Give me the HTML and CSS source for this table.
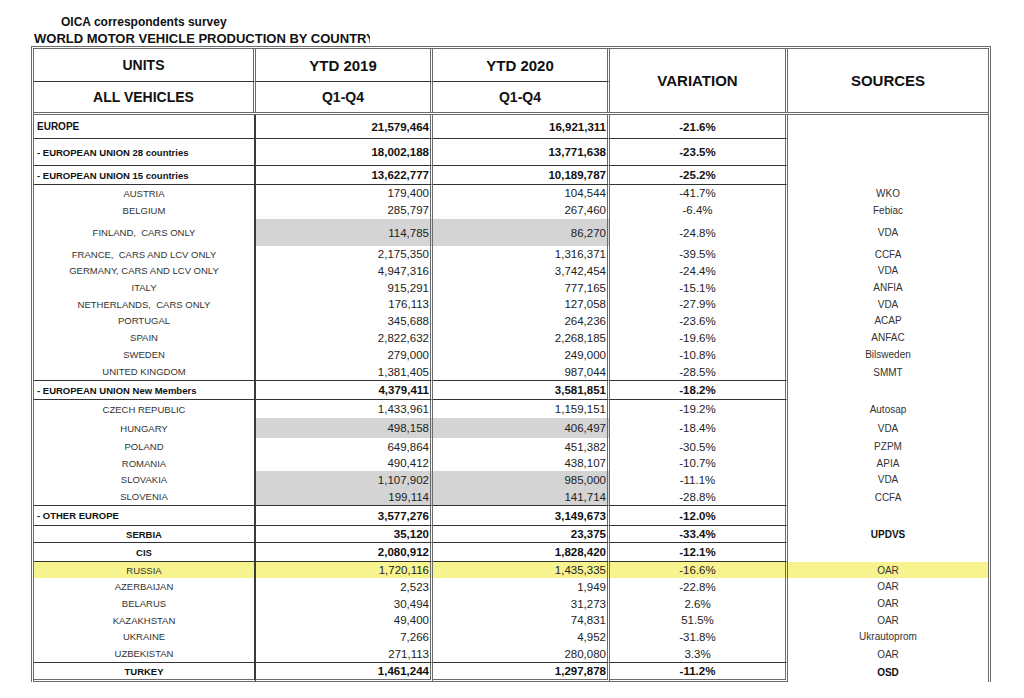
FILE: index.html
```html
<!DOCTYPE html>
<html lang="en">
<head>
<meta charset="utf-8">
<title>OICA correspondents survey</title>
<link rel="stylesheet" href="styles.css">
</head>
<body>
<div class="page">
  <div class="title">OICA correspondents survey</div>
  <div class="subtitle">WORLD MOTOR VEHICLE PRODUCTION BY COUNTRY</div>
  <div class="sheet">
    <div class="head">
      <div class="hc c1 r1 top small">UNITS</div>
      <div class="hc c2 r1 top">YTD 2019</div>
      <div class="hc c3 r1 top">YTD 2020</div>
      <div class="hc c4 span">VARIATION</div>
      <div class="hc c5 span">SOURCES</div>
      <div class="hc c1 r2 small">ALL VEHICLES</div>
      <div class="hc c2 r2 small">Q1-Q4</div>
      <div class="hc c3 r2 small">Q1-Q4</div>
    </div>

    <div class="row h24 ln grp"><div class="c1 left big">EUROPE</div><div class="c2">21,579,464</div><div class="c3">16,921,311</div><div class="c4">-21.6%</div><div class="c5"></div></div>
    <div class="row h27 ln grp"><div class="c1 left">- EUROPEAN UNION 28 countries</div><div class="c2">18,002,188</div><div class="c3">13,771,638</div><div class="c4">-23.5%</div><div class="c5"></div></div>
    <div class="row h19 ln grp"><div class="c1 left">- EUROPEAN UNION 15 countries</div><div class="c2">13,622,777</div><div class="c3">10,189,787</div><div class="c4">-25.2%</div><div class="c5"></div></div>
    <div class="row h16"><div class="c1">AUSTRIA</div><div class="c2">179,400</div><div class="c3">104,544</div><div class="c4">-41.7%</div><div class="c5">WKO</div></div>
    <div class="row h18"><div class="c1">BELGIUM</div><div class="c2">285,797</div><div class="c3">267,460</div><div class="c4">-6.4%</div><div class="c5">Febiac</div></div>
    <div class="row h27 shade"><div class="c1">FINLAND,&nbsp; CARS ONLY</div><div class="c2">114,785</div><div class="c3">86,270</div><div class="c4">-24.8%</div><div class="c5">VDA</div></div>
    <div class="row h16"><div class="c1">FRANCE,&nbsp; CARS AND LCV ONLY</div><div class="c2">2,175,350</div><div class="c3">1,316,371</div><div class="c4">-39.5%</div><div class="c5">CCFA</div></div>
    <div class="row h17"><div class="c1">GERMANY, CARS AND LCV ONLY</div><div class="c2">4,947,316</div><div class="c3">3,742,454</div><div class="c4">-24.4%</div><div class="c5">VDA</div></div>
    <div class="row h17"><div class="c1">ITALY</div><div class="c2">915,291</div><div class="c3">777,165</div><div class="c4">-15.1%</div><div class="c5">ANFIA</div></div>
    <div class="row h16"><div class="c1">NETHERLANDS,&nbsp; CARS ONLY</div><div class="c2">176,113</div><div class="c3">127,058</div><div class="c4">-27.9%</div><div class="c5">VDA</div></div>
    <div class="row h17"><div class="c1">PORTUGAL</div><div class="c2">345,688</div><div class="c3">264,236</div><div class="c4">-23.6%</div><div class="c5">ACAP</div></div>
    <div class="row h17"><div class="c1">SPAIN</div><div class="c2">2,822,632</div><div class="c3">2,268,185</div><div class="c4">-19.6%</div><div class="c5">ANFAC</div></div>
    <div class="row h17"><div class="c1">SWEDEN</div><div class="c2">279,000</div><div class="c3">249,000</div><div class="c4">-10.8%</div><div class="c5">Bilsweden</div></div>
    <div class="row h18 ln"><div class="c1">UNITED KINGDOM</div><div class="c2">1,381,405</div><div class="c3">987,044</div><div class="c4">-28.5%</div><div class="c5">SMMT</div></div>
    <div class="row h19 ln grp"><div class="c1 left">- EUROPEAN UNION New Members</div><div class="c2">4,379,411</div><div class="c3">3,581,851</div><div class="c4">-18.2%</div><div class="c5"></div></div>
    <div class="row h18"><div class="c1">CZECH REPUBLIC</div><div class="c2">1,433,961</div><div class="c3">1,159,151</div><div class="c4">-19.2%</div><div class="c5">Autosap</div></div>
    <div class="row h20 shade"><div class="c1">HUNGARY</div><div class="c2">498,158</div><div class="c3">406,497</div><div class="c4">-18.4%</div><div class="c5">VDA</div></div>
    <div class="row h17"><div class="c1">POLAND</div><div class="c2">649,864</div><div class="c3">451,382</div><div class="c4">-30.5%</div><div class="c5">PZPM</div></div>
    <div class="row h16"><div class="c1">ROMANIA</div><div class="c2">490,412</div><div class="c3">438,107</div><div class="c4">-10.7%</div><div class="c5">APIA</div></div>
    <div class="row h17 shade"><div class="c1">SLOVAKIA</div><div class="c2">1,107,902</div><div class="c3">985,000</div><div class="c4">-11.1%</div><div class="c5">VDA</div></div>
    <div class="row h18 ln shade"><div class="c1">SLOVENIA</div><div class="c2">199,114</div><div class="c3">141,714</div><div class="c4">-28.8%</div><div class="c5">CCFA</div></div>
    <div class="row h20 ln grp"><div class="c1 left">- OTHER EUROPE</div><div class="c2">3,577,276</div><div class="c3">3,149,673</div><div class="c4">-12.0%</div><div class="c5"></div></div>
    <div class="row h17 ln grp"><div class="c1">SERBIA</div><div class="c2">35,120</div><div class="c3">23,375</div><div class="c4">-33.4%</div><div class="c5">UPDVS</div></div>
    <div class="row h19 ln grp"><div class="c1">CIS</div><div class="c2">2,080,912</div><div class="c3">1,828,420</div><div class="c4">-12.1%</div><div class="c5"></div></div>
    <div class="row h16 hl"><div class="c1">RUSSIA</div><div class="c2">1,720,116</div><div class="c3">1,435,335</div><div class="c4">-16.6%</div><div class="c5">OAR</div></div>
    <div class="row h17"><div class="c1">AZERBAIJAN</div><div class="c2">2,523</div><div class="c3">1,949</div><div class="c4">-22.8%</div><div class="c5">OAR</div></div>
    <div class="row h17"><div class="c1">BELARUS</div><div class="c2">30,494</div><div class="c3">31,273</div><div class="c4">2.6%</div><div class="c5">OAR</div></div>
    <div class="row h16"><div class="c1">KAZAKHSTAN</div><div class="c2">49,400</div><div class="c3">74,831</div><div class="c4">51.5%</div><div class="c5">OAR</div></div>
    <div class="row h17"><div class="c1">UKRAINE</div><div class="c2">7,266</div><div class="c3">4,952</div><div class="c4">-31.8%</div><div class="c5">Ukrautoprom</div></div>
    <div class="row h18 ln"><div class="c1">UZBEKISTAN</div><div class="c2">271,113</div><div class="c3">280,080</div><div class="c4">3.3%</div><div class="c5">OAR</div></div>
    <div class="row h19 last grp"><div class="c1">TURKEY</div><div class="c2">1,461,244</div><div class="c3">1,297,878</div><div class="c4">-11.2%</div><div class="c5">OSD</div></div>
  </div>
</div>
</body>
</html>
```

FILE: styles.css
```css
* { box-sizing: border-box; }

body {
  margin: 0;
  background: #fff;
  font-family: "Liberation Sans", Arial, sans-serif;
  color: #222;
}

.page {
  padding-top: 15px;
}

.title {
  margin-left: 61px;
  font-size: 12px;
  line-height: 14px;
  font-weight: bold;
  color: #111;
}

.subtitle {
  margin: 3px 0 0 34px;
  width: 336px;
  overflow: hidden;
  white-space: nowrap;
  font-size: 13px;
  line-height: 14px;
  font-weight: bold;
  color: #111;
}

.sheet {
  margin-left: 31px;
  width: 960px;
  border-top: 3px double #6b6b6b;
  border-left: 3px double #6b6b6b;
  border-right: 3px double #6b6b6b;
}

/* header */
.head {
  display: grid;
  grid-template-columns: 222px 177px 177px 178px 200px;
  grid-template-rows: 33px 30px;
  border-bottom: 3px double #6b6b6b;
}

.hc {
  display: flex;
  align-items: center;
  justify-content: center;
  font-weight: bold;
  font-size: 15px;
  color: #111;
}

.hc.small { font-size: 14px; }
.hc.top { border-bottom: 1px solid #333; }
.hc.r1 { grid-row: 1; }
.hc.r2 { grid-row: 2; }
.hc.span { grid-row: 1 / 3; }
.head .c1 { grid-column: 1; }
.head .c2 { grid-column: 2; }
.head .c3 { grid-column: 3; }
.head .c4 { grid-column: 4; }
.head .c5 { grid-column: 5; }
.head .c1,
.head .c2,
.head .c3,
.head .c4 { border-right: 3px double #6b6b6b; }

/* body rows */
.row {
  display: grid;
  grid-template-columns: 222px 177px 177px 178px 200px;
}

.row > div {
  display: flex;
  align-items: center;
  white-space: nowrap;
}

.h16 { height: 16px; }
.h17 { height: 17px; }
.h18 { height: 18px; }
.h19 { height: 19px; }
.h20 { height: 20px; }
.h24 { height: 24px; }
.h27 { height: 27px; }

.row .c1 {
  justify-content: center;
  font-size: 9.5px;
  color: #333;
  border-right: 2px solid #3a3a3a;
}

.row .c1.left {
  justify-content: flex-start;
  padding-left: 3px;
}

.row .c1.big { font-size: 10px; }

.row .c2,
.row .c3 {
  justify-content: flex-end;
  padding-right: 1px;
  font-size: 11.5px;
  border-right: 3px double #6b6b6b;
}

.row .c4 {
  justify-content: center;
  font-size: 11.5px;
  border-right: 3px double #6b6b6b;
}

.row .c5 {
  justify-content: center;
  font-size: 10px;
  color: #333;
}

.row.ln .c1,
.row.ln .c2,
.row.ln .c3,
.row.ln .c4 {
  border-bottom: 1px solid #333;
}

.row.last .c1,
.row.last .c2,
.row.last .c3,
.row.last .c4 {
  border-bottom: 3px double #6b6b6b;
}

.row.grp > div {
  font-weight: bold;
  color: #111;
}

.row.shade .c2,
.row.shade .c3 {
  background: #d4d4d4;
}

.row.hl > div {
  background: #f7f490;
}
```
